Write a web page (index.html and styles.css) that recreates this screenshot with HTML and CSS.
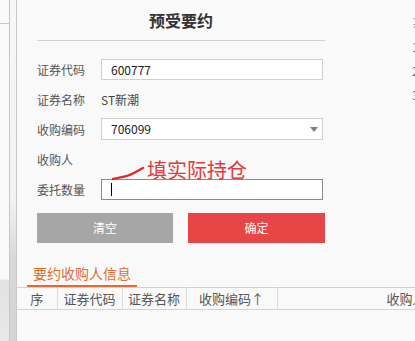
FILE: index.html
```html
<!DOCTYPE html>
<html lang="zh-CN">
<head>
	<meta charset="UTF-8">
	<title>预受要约</title>
	<link rel="stylesheet" href="styles.css">
</head>
<body>
	<div id="page">
		<div class="side-a"><div class="side-head"></div></div>
		<div class="side-b"></div>
		<div id="main">
			<div class="top">
				<div id="form">
					<h1 class="title">预受要约</h1>
					<div class="row">
						<span class="label">证券代码</span>
						<div class="input">600777</div>
					</div>
					<div class="row">
						<span class="label">证券名称</span>
						<span class="value">ST新潮</span>
					</div>
					<div class="row">
						<span class="label">收购编码</span>
						<div class="input select">706099<i class="caret"></i></div>
					</div>
					<div class="row">
						<span class="label">收购人</span>
					</div>
					<div class="row">
						<span class="label">委托数量</span>
						<div class="input focus"><i class="cursor"></i></div>
					</div>
					<div class="btns">
						<span class="btn gray">清空</span>
						<span class="btn red">确定</span>
					</div>
				</div>
				<ul class="side-list">
					<li>≥</li>
					<li>1</li>
					<li>2</li>
					<li>3</li>
				</ul>
			</div>
			<div class="tabs">
				<span class="tab selected">要约收购人信息</span>
			</div>
			<table class="grid">
				<tr>
					<th class="c1">序</th>
					<th class="c2">证券代码</th>
					<th class="c3">证券名称</th>
					<th class="c4">收购编码↑</th>
					<th class="c5">收购人名称</th>
				</tr>
			</table>

			<!-- 手写批注 -->
			<svg class="mark" width="34" height="16" viewBox="0 0 34 16">
				<path d="M1 13 C8 11 14 11 20 8 C24 6 27 4 31 2" fill="none" stroke="#e02a2a" stroke-width="2.4" stroke-linecap="round"/>
			</svg>
			<span class="note">填实际持仓</span>
		</div>
	</div>
</body>
</html>
```

FILE: styles.css
```css
*{
	margin: 0;
	padding: 0;
	box-sizing: border-box;
}
ul, ol{
	list-style: none;
}
body{
	width: 415px;
	height: 341px;
	overflow: hidden;
	background: #f9f9f9;
	font-family: "Noto Sans CJK SC", "Liberation Sans", sans-serif;
	font-size: 12px;
	color: #555;
}
#page{
	display: flex;
	height: 341px;
}
.side-a{
	width: 10px;
	border-right: 1px solid #c8c8c8;
	background: linear-gradient(#f9f9f9 0, #f9f9f9 279px, #e2e2e2 280px, #e8e8e8 100%);
}
.side-head{
	height: 24px;
	border-bottom: 1px solid #c8c8c8;
}
.side-b{
	width: 7px;
	border-right: 1px solid #c8c8c8;
	background: linear-gradient(#f7f7f7 0, #f2f2f2 200px, #d8d8d8 260px, #d4d4d4 100%);
}
#main{
	flex: 1;
	position: relative;
	overflow: hidden;
}
.top{
	display: flex;
	padding-left: 20px;
}
#form{
	width: 288px;
}
.title{
	height: 41px;
	line-height: 40px;
	border-bottom: 1px solid #d3d3d3;
	text-align: center;
	font-size: 16px;
	font-weight: bold;
	color: #333;
	margin-bottom: 13px;
}
.row{
	display: flex;
	align-items: center;
	height: 30px;
}
.label{
	width: 64px;
}
.value{
	color: #444;
}
.input{
	position: relative;
	width: 222px;
	height: 21px;
	line-height: 19px;
	padding-left: 9px;
	background: #fff;
	border: 1px solid #cfcfcf;
	color: #222;
}
.select{
	height: 22px;
	line-height: 20px;
}
.caret{
	position: absolute;
	right: 4px;
	top: 8px;
	border-left: 4px solid transparent;
	border-right: 4px solid transparent;
	border-top: 5px solid #808080;
}
.focus{
	border-color: #8a8a8a;
}
.cursor{
	position: absolute;
	left: 9px;
	top: 3px;
	width: 1px;
	height: 13px;
	background: #000;
}
.btns{
	display: flex;
	gap: 15px;
	margin-top: 9px;
}
.btn{
	height: 30px;
	line-height: 30px;
	text-align: center;
	color: #fff;
	font-size: 12px;
}
.gray{
	width: 136px;
	background: #a6a6a6;
}
.red{
	width: 137px;
	background: #e84646;
}
.side-list{
	margin-left: 87px;
	padding-top: 13px;
	color: #777;
}
.side-list li{
	height: 24px;
	line-height: 20px;
}
.tabs{
	margin-top: 19px;
	padding-left: 10px;
	display: flex;
}
.tab{
	width: 110px;
	height: 25px;
	line-height: 23px;
	text-align: center;
	font-size: 14px;
	color: #e46b2e;
	border-bottom: 2px solid #e46b2e;
}
.grid{
	border-collapse: collapse;
	width: 460px;
	table-layout: fixed;
}
.grid th{
	height: 22px;
	font-weight: normal;
	font-size: 13px;
	color: #555;
	border-top: 1px solid #d3d3d3;
	border-bottom: 1px solid #d3d3d3;
	border-right: 1px solid #dcdcdc;
	white-space: nowrap;
	overflow: hidden;
}
.c1{ width: 40px; }
.c2{ width: 65px; }
.c3{ width: 64px; }
.c4{ width: 91px; }
.c5{
	width: 200px;
	text-align: left;
	padding-left: 109px;
}
.mark{
	position: absolute;
	left: 95px;
	top: 166px;
}
.note{
	position: absolute;
	left: 130px;
	top: 157px;
	font-size: 20px;
	line-height: 26px;
	color: #e03a3a;
}
```
